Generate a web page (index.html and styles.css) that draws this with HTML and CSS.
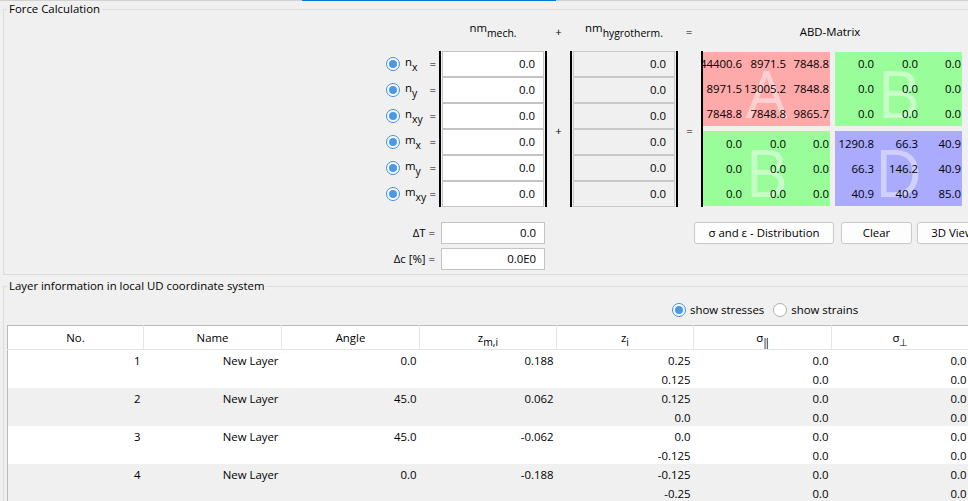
FILE: index.html
```html
<!DOCTYPE html>
<html>
<head>
<meta charset="utf-8">
<title>Force Calculation</title>
<link rel="stylesheet" href="styles.css">
</head>
<body>
<div class="tabline"><span class="tab-active"></span></div>

<fieldset class="group force">
  <legend>Force Calculation</legend>
  <div class="calc">
    <div class="head">
      <div class="h-lbl"></div>
      <div class="h-vec">nm<sub>mech.</sub></div>
      <div class="h-op">+</div>
      <div class="h-vec">nm<sub>hygrotherm.</sub></div>
      <div class="h-op eqop">=</div>
      <div class="h-abd">ABD-Matrix</div>
    </div>

    <div class="body">
      <div class="labels">
        <div class="lrow"><span class="radio on"></span><span class="sym">n<sub>x</sub></span><span class="eq">=</span></div>
        <div class="lrow"><span class="radio on"></span><span class="sym">n<sub>y</sub></span><span class="eq">=</span></div>
        <div class="lrow"><span class="radio on"></span><span class="sym">n<sub>xy</sub></span><span class="eq">=</span></div>
        <div class="lrow"><span class="radio on"></span><span class="sym">m<sub>x</sub></span><span class="eq">=</span></div>
        <div class="lrow"><span class="radio on"></span><span class="sym">m<sub>y</sub></span><span class="eq">=</span></div>
        <div class="lrow"><span class="radio on"></span><span class="sym">m<sub>xy</sub></span><span class="eq">=</span></div>
      </div>

      <div class="vector">
        <div class="field">0.0</div>
        <div class="field">0.0</div>
        <div class="field">0.0</div>
        <div class="field">0.0</div>
        <div class="field">0.0</div>
        <div class="field">0.0</div>
      </div>

      <div class="op">+</div>

      <div class="vector disabled">
        <div class="field">0.0</div>
        <div class="field">0.0</div>
        <div class="field">0.0</div>
        <div class="field">0.0</div>
        <div class="field">0.0</div>
        <div class="field">0.0</div>
      </div>

      <div class="op eqop">=</div>

      <div class="abd">
        <div class="blk blk-a">
          <span class="big">A</span>
          <span class="c">44400.6</span><span class="c">8971.5</span><span class="c">7848.8</span>
          <span class="c">8971.5</span><span class="c">13005.2</span><span class="c">7848.8</span>
          <span class="c">7848.8</span><span class="c">7848.8</span><span class="c">9865.7</span>
        </div>
        <div class="blk blk-b">
          <span class="big">B</span>
          <span class="c">0.0</span><span class="c">0.0</span><span class="c">0.0</span>
          <span class="c">0.0</span><span class="c">0.0</span><span class="c">0.0</span>
          <span class="c">0.0</span><span class="c">0.0</span><span class="c">0.0</span>
        </div>
        <div class="blk blk-b">
          <span class="big">B</span>
          <span class="c">0.0</span><span class="c">0.0</span><span class="c">0.0</span>
          <span class="c">0.0</span><span class="c">0.0</span><span class="c">0.0</span>
          <span class="c">0.0</span><span class="c">0.0</span><span class="c">0.0</span>
        </div>
        <div class="blk blk-d">
          <span class="big">D</span>
          <span class="c">1290.8</span><span class="c">66.3</span><span class="c">40.9</span>
          <span class="c">66.3</span><span class="c">146.2</span><span class="c">40.9</span>
          <span class="c">40.9</span><span class="c">40.9</span><span class="c">85.0</span>
        </div>
      </div>
    </div>

    <div class="extra">
      <div class="xlabels">
        <div class="xl">ΔT =</div>
        <div class="xl">Δc [%] =</div>
      </div>
      <div class="xinputs">
        <div class="xfield">0.0</div>
        <div class="xfield">0.0E0</div>
      </div>
      <div class="buttons">
        <button class="btn btn-dist">σ and ε - Distribution</button>
        <button class="btn btn-clear">Clear</button>
        <button class="btn btn-3d">3D View</button>
      </div>
    </div>
  </div>
</fieldset>

<fieldset class="group layers">
  <legend>Layer information in local UD coordinate system</legend>
  <div class="opts">
    <span class="radio on"></span><span class="opt-text">show stresses</span>
    <span class="radio off"></span><span class="opt-text">show strains</span>
  </div>
  <table class="grid">
    <colgroup>
      <col class="w136"><col class="w138"><col class="w138"><col class="w137"><col class="w137"><col class="w138"><col class="w138">
    </colgroup>
    <thead>
      <tr>
        <th>No.</th>
        <th>Name</th>
        <th>Angle</th>
        <th>z<sub>m,i</sub></th>
        <th>z<sub>i</sub></th>
        <th>σ<sub>‖</sub></th>
        <th>σ<sub>⊥</sub></th>
      </tr>
    </thead>
    <tbody>
      <tr>
        <td><div class="ln">1</div><div class="ln"></div></td>
        <td><div class="ln">New Layer</div><div class="ln"></div></td>
        <td><div class="ln">0.0</div><div class="ln"></div></td>
        <td><div class="ln">0.188</div><div class="ln"></div></td>
        <td><div class="ln">0.25</div><div class="ln">0.125</div></td>
        <td><div class="ln">0.0</div><div class="ln">0.0</div></td>
        <td><div class="ln">0.0</div><div class="ln">0.0</div></td>
      </tr>
      <tr>
        <td><div class="ln">2</div><div class="ln"></div></td>
        <td><div class="ln">New Layer</div><div class="ln"></div></td>
        <td><div class="ln">45.0</div><div class="ln"></div></td>
        <td><div class="ln">0.062</div><div class="ln"></div></td>
        <td><div class="ln">0.125</div><div class="ln">0.0</div></td>
        <td><div class="ln">0.0</div><div class="ln">0.0</div></td>
        <td><div class="ln">0.0</div><div class="ln">0.0</div></td>
      </tr>
      <tr>
        <td><div class="ln">3</div><div class="ln"></div></td>
        <td><div class="ln">New Layer</div><div class="ln"></div></td>
        <td><div class="ln">45.0</div><div class="ln"></div></td>
        <td><div class="ln">-0.062</div><div class="ln"></div></td>
        <td><div class="ln">0.0</div><div class="ln">-0.125</div></td>
        <td><div class="ln">0.0</div><div class="ln">0.0</div></td>
        <td><div class="ln">0.0</div><div class="ln">0.0</div></td>
      </tr>
      <tr>
        <td><div class="ln">4</div><div class="ln"></div></td>
        <td><div class="ln">New Layer</div><div class="ln"></div></td>
        <td><div class="ln">0.0</div><div class="ln"></div></td>
        <td><div class="ln">-0.188</div><div class="ln"></div></td>
        <td><div class="ln">-0.125</div><div class="ln">-0.25</div></td>
        <td><div class="ln">0.0</div><div class="ln">0.0</div></td>
        <td><div class="ln">0.0</div><div class="ln">0.0</div></td>
      </tr>
    </tbody>
  </table>
</fieldset>
</body>
</html>
```

FILE: styles.css
```css
* { box-sizing: border-box; }

html, body {
  margin: 0;
  padding: 0;
}

body {
  width: 968px;
  height: 501px;
  overflow: hidden;
  background: #f0f0f0;
  color: #000;
  font-family: "Open Sans", "Noto Sans", "Liberation Sans", sans-serif;
  font-size: 11.4px;
  line-height: 16px;
}

sub {
  font-size: 10.4px;
  line-height: 0;
  vertical-align: -5px;
}

/* top tab strip */
.tabline {
  height: 1px;
  background: #d2d2d2;
  display: flex;
}
.tab-active {
  margin-left: 302px;
  width: 254px;
  height: 1px;
  background: #0078d7;
}

/* group boxes */
.group {
  margin: 0 0 0 3px;
  padding: 0;
  border: 1px solid #dcdcdc;
  width: 1000px;
  min-width: 0;
}
.group legend {
  margin-left: 3px;
  padding: 0 2px;
  line-height: 16px;
}

.force { padding-bottom: 4px; }
.layers { margin-top: 3px; padding-top: 6px; }

/* force calculation */
.calc { padding-left: 379px; }

.head {
  display: flex;
  height: 34px;
  padding-top: 3px;
}
.h-lbl { width: 56px; }
.h-vec { width: 108px; text-align: center; white-space: nowrap; }
.h-op { width: 23px; text-align: center; padding-top: 4px; }
.eqop { width: 22px; }
.h-abd { width: 260px; text-align: center; padding-top: 4px; }

.body {
  display: flex;
  height: 156px;
}

.labels { width: 56px; display: flex; flex-direction: column; }
.lrow {
  height: 26px;
  display: flex;
  align-items: center;
}
.lrow .radio { margin-left: 3px; }
.sym { margin-left: 5px; margin-top: -5px; white-space: nowrap; }
.eq { margin-left: auto; margin-right: 3px; }

.radio {
  display: inline-block;
  flex: none;
  width: 14px;
  height: 14px;
  border-radius: 50%;
  border: 1px solid #3b8de5;
  background: #fff;
  position: relative;
}
.radio.on::after {
  content: "";
  position: absolute;
  left: 2px;
  top: 2px;
  width: 8px;
  height: 8px;
  border-radius: 50%;
  background: #4a99e8;
}
.radio.off { border-color: #b0b0b0; }

.vector {
  width: 108px;
  border-left: 2px solid #000;
  border-right: 2px solid #000;
  padding: 0 1px;
  display: flex;
  flex-direction: column;
}
.field {
  height: 26px;
  border: 1px solid #c4c4c4;
  background: #fff;
  text-align: right;
  padding-right: 8px;
  line-height: 24px;
}
.vector.disabled .field {
  background: #f0f0f0;
  border-color: #c8c8c8;
}

.op {
  width: 23px;
  display: flex;
  align-items: center;
  justify-content: center;
  padding-top: 3px;
}

.abd {
  border-left: 2px solid #000;
  padding-top: 1px;
  display: grid;
  grid-template-columns: 127px 127px;
  grid-template-rows: 74px 75px;
  column-gap: 5px;
  row-gap: 5px;
  height: 156px;
}
.blk {
  position: relative;
  overflow: hidden;
  display: grid;
  grid-template-columns: 40px 44px 43px;
  grid-template-rows: repeat(3, 1fr);
  align-items: center;
}
.blk-a { background: #ffaaaa; }
.blk-b { background: #99fd99; }
.blk-d { background: #aaaaff; }
.big {
  position: absolute;
  left: 0;
  right: 0;
  top: 5px;
  bottom: 0;
  display: flex;
  align-items: center;
  justify-content: center;
  font-size: 66px;
  line-height: 1;
  color: rgba(255, 255, 255, 0.45);
}
.c {
  position: relative;
  z-index: 1;
  direction: rtl;
  text-align: right;
  white-space: nowrap;
  padding-right: 1px;
}

.extra {
  display: flex;
  margin-top: 15px;
}
.xlabels { width: 56px; }
.xl {
  height: 22px;
  line-height: 22px;
  text-align: right;
  padding-right: 4px;
  margin-bottom: 4px;
}
.xl:last-child, .xfield:last-child { margin-bottom: 0; }
.xinputs { margin-left: 2px; width: 104px; }
.xfield {
  height: 22px;
  line-height: 20px;
  border: 1px solid #c4c4c4;
  background: #fff;
  text-align: right;
  padding-right: 8px;
  margin-bottom: 4px;
}

.buttons {
  display: flex;
  margin-left: 149px;
  align-items: flex-start;
}
.btn {
  height: 22px;
  font: inherit;
  color: #000;
  background: #fdfdfd;
  border: 1px solid #c9c9c9;
  border-radius: 3px;
  padding: 0;
  white-space: nowrap;
}
.btn-dist { width: 140px; }
.btn-clear { width: 71px; margin-left: 7px; }
.btn-3d { width: 71px; margin-left: 5px; }

/* layer information */
.opts {
  display: flex;
  align-items: center;
  height: 20px;
  margin-left: 668px;
}
.opt-text { margin-left: 4px; margin-right: 9px; }

.grid {
  margin: 5px 0 0 3px;
  border-collapse: collapse;
  table-layout: fixed;
  width: 962px;
  border-top: 1px solid #b9b9b9;
  border-left: 1px solid #b9b9b9;
}
.w136 { width: 136px; }
.w137 { width: 137px; }
.w138 { width: 138px; }

.grid th {
  height: 24px;
  padding: 0;
  background: #fff;
  font-weight: normal;
  text-align: center;
  border-right: 1px solid #e5e5e5;
  border-bottom: 1px solid #e5e5e5;
  white-space: nowrap;
}
.grid th sub { vertical-align: -4px; }
.grid td {
  padding: 1px 3px 0 0;
  text-align: right;
  vertical-align: top;
  white-space: nowrap;
}
.grid tbody tr:nth-child(odd) { background: #fff; }
.grid tbody tr:nth-child(even) { background: #f0f0f0; }
.ln {
  height: 19px;
  line-height: 19px;
}
.ln:last-child { height: 18px; }
```
